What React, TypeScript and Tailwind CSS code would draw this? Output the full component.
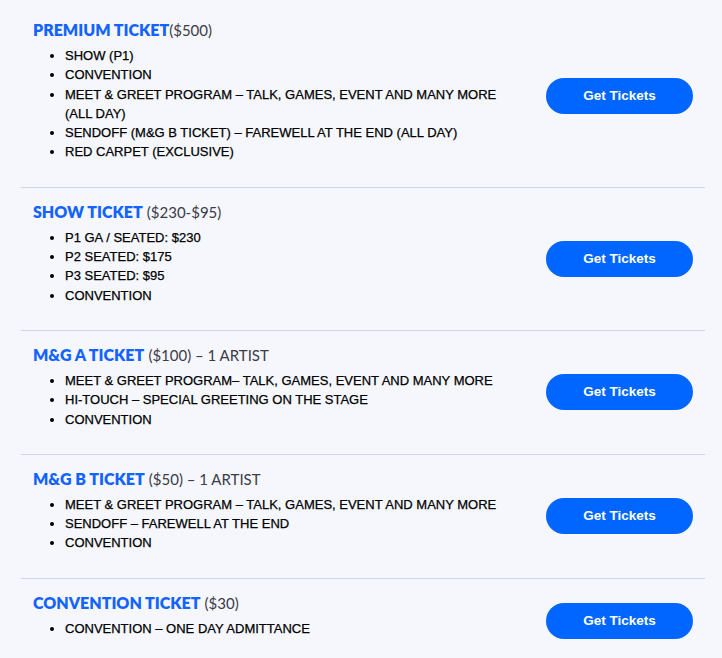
const tickets = [
  {
    name: 'PREMIUM TICKET',
    price: '($500)',
    gap: false,
    items: [
      'SHOW (P1)',
      'CONVENTION',
      'MEET & GREET PROGRAM – TALK, GAMES, EVENT AND MANY MORE (ALL DAY)',
      'SENDOFF (M&G B TICKET) – FAREWELL AT THE END (ALL DAY)',
      'RED CARPET (EXCLUSIVE)',
    ],
  },
  {
    name: 'SHOW TICKET',
    price: '($230-$95)',
    gap: true,
    items: ['P1 GA / SEATED: $230', 'P2 SEATED: $175', 'P3 SEATED: $95', 'CONVENTION'],
  },
  {
    name: 'M&G A TICKET',
    price: '($100) – 1 ARTIST',
    gap: true,
    items: [
      'MEET & GREET PROGRAM– TALK, GAMES, EVENT AND MANY MORE',
      'HI-TOUCH – SPECIAL GREETING ON THE STAGE',
      'CONVENTION',
    ],
  },
  {
    name: 'M&G B TICKET',
    price: '($50) – 1 ARTIST',
    gap: true,
    items: [
      'MEET & GREET PROGRAM – TALK, GAMES, EVENT AND MANY MORE',
      'SENDOFF – FAREWELL AT THE END',
      'CONVENTION',
    ],
  },
  {
    name: 'CONVENTION TICKET',
    price: '($30)',
    gap: true,
    items: ['CONVENTION – ONE DAY ADMITTANCE'],
  },
];

export default function App() {
  return (
    <div className="min-h-screen w-full bg-[#f5f7fd] px-[21px] pt-[6px]">
      <div className="w-[684px]">
        {tickets.map((t, i) => (
          <div
            key={t.name}
            className={`flex items-center gap-[30px] px-3 py-[14px] ${
              i < tickets.length - 1 ? 'border-b border-[#cbd6f2]' : ''
            }`}
          >
            {/* 티켓 정보 */}
            <div className="flex-1">
              <h2 className="text-[16px] leading-5 font-['Lato',sans-serif]">
                <span className="font-extrabold text-[#1263ff]">{t.name}</span>
                {t.gap ? ' ' : ''}
                <span className="text-[15px] text-[#3c3c46]">{t.price}</span>
              </h2>
              <ul className="mt-[6px] mb-[11px] list-disc pl-8 text-[13px] leading-[19.3px] text-black font-['Liberation_Sans',Arial,sans-serif] [-webkit-text-stroke:0.25px_#000]">
                {t.items.map((item) => (
                  <li key={item}>{item}</li>
                ))}
              </ul>
            </div>
            <button className="h-9 w-[147px] shrink-0 rounded-full bg-[#0066ff] text-[13.5px] font-bold text-white font-['Liberation_Sans',Arial,sans-serif]">
              Get Tickets
            </button>
          </div>
        ))}
      </div>
    </div>
  );
}
